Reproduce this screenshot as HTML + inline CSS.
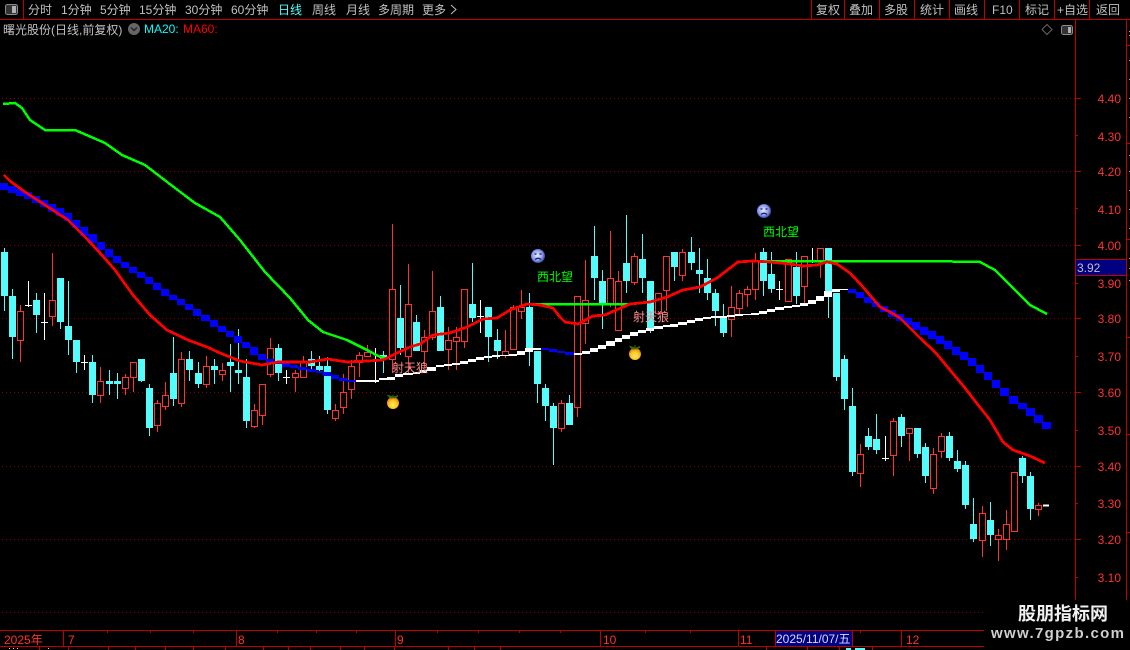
<!DOCTYPE html>
<html><head><meta charset="utf-8"><title>K线</title>
<style>
html,body{margin:0;padding:0;background:#000;width:1130px;height:650px;overflow:hidden}
svg{display:block}
text{font-family:"Liberation Sans","WenQuanYi Zen Hei","Noto Sans CJK SC",sans-serif;font-size:12px;fill:#c0c0c0}
.p{fill:#ff3232;text-anchor:end;font-size:12px}
.d{fill:#ff3232;font-size:12px}
</style></head><body>
<svg width="1130" height="650" viewBox="0 0 1130 650" xmlns="http://www.w3.org/2000/svg">
<defs>
<radialGradient id="f" cx=".45" cy=".45" r=".6"><stop offset="0" stop-color="#e8ecff"/><stop offset=".6" stop-color="#8c9cf0"/><stop offset="1" stop-color="#2a2f90"/></radialGradient>
<radialGradient id="o" cx=".5" cy=".65" r=".6"><stop offset="0" stop-color="#fff060"/><stop offset=".6" stop-color="#ffc020"/><stop offset="1" stop-color="#e08000"/></radialGradient>
</defs>
<rect width="1130" height="650" fill="#000"/>

<!-- grid -->
<g stroke="#8c0000" stroke-dasharray="1 3" shape-rendering="crispEdges">
<path d="M2 98.500H1075M2 171.500H1075M2 245.500H1075M2 318.500H1075M2 392.500H1075M2 466.500H1075M2 539.500H1075M2 612.500H984"/>
</g>

<g shape-rendering="crispEdges">
<!-- cyan wicks -->
<path fill="none" stroke="#54fcfc" d="M4.500 248V311M12.500 289V359M36.500 293V333M60.500 278V329M68.500 281V355M76.500 340V373M92.500 355V403M109.500 370V395M117.500 373V399M141.500 359V382M149.500 384V436M173.500 337V406M189.500 351V381M198.500 362V388M214.500 359V384M230.500 344V392M238.500 329V384M246.500 359V428M278.500 344V381M311.500 351V370M319.500 356V373M327.500 357V414M383.500 351V373M400.500 285V355M416.500 315V351M440.500 296V351M472.500 263V322M488.500 307V362M497.500 329V359M529.500 293V366M537.500 351V403M545.500 384V421M553.500 403V465M569.500 395V425M594.500 226V300M602.500 270V329M626.500 215V293M642.500 234V293M650.500 281V333M674.500 252V281M691.500 237V270M699.500 248V293M707.500 259V300M715.500 289V326M723.500 304V337M763.500 248V296M771.500 252V293M796.500 252V304M828.500 248V318M836.500 293V381M844.500 355V410M852.500 388V476M868.500 428V450M876.500 414V454M901.500 414V447M917.500 428V458M925.500 443V483M949.500 432V461M957.500 450V472M965.500 461V509M973.500 498V542M990.500 502V546M1022.500 456V483M1030.500 472V520"/>
<!-- cyan bodies -->
<path fill="none" stroke="#54fcfc" stroke-width="7" d="M4.500 252V296M12.500 296V337M36.500 300V315M60.500 278V322M68.500 326V340M76.500 340V362M92.500 362V395M109.500 381V384M117.500 381V384M141.500 359V381M149.500 388V428M173.500 373V399M189.500 359V370M198.500 373V384M214.500 366V370M230.500 362V366M238.500 370V373M246.500 377V421M278.500 348V373M311.500 359V366M319.500 366V370M327.500 366V410M383.500 355V359M400.500 318V348M416.500 322V351M440.500 307V351M472.500 304V318M488.500 307V337M497.500 340V351M529.500 307V351M537.500 351V384M545.500 388V406M553.500 406V428M569.500 403V425M594.500 256V278M602.500 281V303M626.500 263V281M642.500 259V278M650.500 281V328M674.500 252V267M691.500 252V263M699.500 270V274M707.500 278V293M715.500 293V311M723.500 318V333M763.500 252V281M771.500 274V289M796.500 267V296M828.500 248V297M836.500 293V377M844.500 359V399M852.500 406V472M868.500 436V447M876.500 439V450M901.500 417V436M917.500 428V454M925.500 447V476M949.500 436V458M957.500 461V469M965.500 465V505M973.500 524V539M990.500 520V535M1022.500 458V476M1030.500 476V509"/>
<!-- red wicks -->
<path fill="none" stroke="#ff3232" d="M20.500 305V362M52.500 253V326M100.500 367V403M125.500 374V395M133.500 362V392M157.500 400V432M165.500 382V410M181.500 352V407M206.500 356V388M222.500 363V381M254.500 404V428M262.500 384V425M270.500 338V377M295.500 370V392M303.500 356V377M335.500 404V421M343.500 374V414M351.500 360V399M359.500 352V377M367.500 345V356M392.500 224V373M408.500 264V373M424.500 330V368M432.500 271V340M448.500 327V370M456.500 327V370M464.500 289V348M505.500 330V358M513.500 305V349M521.500 290V319M561.500 400V432M577.500 296V417M585.500 260V344M610.500 231V307M618.500 271V330M634.500 253V285M658.500 293V313M666.500 256V311M682.500 249V281M731.500 286V337M739.500 290V315M747.500 286V307M755.500 253V300M788.500 259V301M804.500 256V303M820.500 248V278M860.500 444V487M893.500 418V476M909.500 428V461M933.500 448V494M941.500 433V458M982.500 506V557M998.500 529V561M1006.500 510V550M1014.500 472V531M1038.500 503V516"/>
<!-- red bodies -->
<path fill="#000" stroke="#ff3232" d="M17.500 311.500h6v29h-6zM49.500 300.500h6v16h-6zM97.500 381.500h6v14h-6zM122.500 377.500h6v11h-6zM130.500 362.500h6v15h-6zM154.500 403.500h6v22h-6zM162.500 395.500h6v11h-6zM178.500 359.500h6v44h-6zM203.500 366.500h6v18h-6zM219.500 370.500h6v4h-6zM251.500 410.500h6v16h-6zM259.500 384.500h6v31h-6zM267.500 348.500h6v26h-6zM292.500 373.500h6v4h-6zM300.500 362.500h6v15h-6zM332.500 410.500h6v8h-6zM340.500 392.500h6v15h-6zM348.500 366.500h6v23h-6zM356.500 355.500h6v7h-6zM364.500 352.500h6v4h-6zM389.500 289.500h6v70h-6zM405.500 304.500h6v52h-6zM421.500 337.500h6v14h-6zM429.500 311.500h6v26h-6zM445.500 340.500h6v9h-6zM453.500 337.500h6v4h-6zM461.500 289.500h6v52h-6zM502.500 351.500h6v4h-6zM510.500 307.500h6v42h-6zM518.500 307.500h6v4h-6zM558.500 403.500h6v25h-6zM574.500 296.500h6v111h-6zM582.500 300.500h6v23h-6zM607.500 278.500h6v25h-6zM615.500 281.500h6v49h-6zM631.500 256.500h6v26h-6zM655.500 293.500h6v20h-6zM663.500 256.500h6v34h-6zM679.500 252.500h6v23h-6zM728.500 307.500h6v12h-6zM736.500 293.500h6v15h-6zM744.500 289.500h6v5h-6zM752.500 260.500h6v29h-6zM785.500 259.500h6v42h-6zM801.500 256.500h6v30h-6zM817.500 248.500h6v12h-6zM857.500 454.500h6v19h-6zM890.500 421.500h6v34h-6zM906.500 428.500h6v5h-6zM930.500 454.500h6v34h-6zM938.500 436.500h6v15h-6zM979.500 513.500h6v27h-6zM995.500 535.500h6v4h-6zM1003.500 524.500h6v15h-6zM1011.500 472.500h6v59h-6zM1035.500 505.500h6v4h-6z"/>
<!-- white dojis -->
<path fill="none" stroke="#fff" d="M28.500 281V307M25 305.500H32M44.500 293V340M41 322.500H48M84.500 355V370M81 362.500H88M286.500 370V384M283 377.500H290M375.500 348V383M372 380.500H379M480.500 300V333M477 316.500H484M779.500 281V300M776 289.500H783M812.500 248V263M809 260.500H816M885.500 436V461M882 458.500H889"/>
<path fill="none" stroke="#fff" stroke-width="2" d="M1043 505.500H1049"/>

<!-- blue stepped -->
<path fill="#0000ff" d="M0 183h8v7h-8zM8 186h8v7h-8zM16 189h8v7h-8zM24 192h8v7h-8zM32 196h8v7h-8zM40 200h8v7h-8zM48 204h8v8h-8zM56 208h8v8h-8zM64 213h8v8h-8zM72 220h8v8h-8zM80 227h8v9h-8zM88 234h9v9h-9zM97 242h8v8h-8zM105 249h8v8h-8zM113 256h8v7h-8zM121 262h8v6h-8zM129 267h8v6h-8zM137 272h8v6h-8zM145 277h8v7h-8zM153 283h8v7h-8zM161 289h8v7h-8zM169 295h8v5h-8zM177 299h8v6h-8zM185 304h8v6h-8zM193 309h8v7h-8zM201 315h9v6h-9zM210 320h8v7h-8zM218 326h8v6h-8zM226 331h8v6h-8zM234 336h8v7h-8zM242 342h8v6h-8zM250 347h8v8h-8zM258 354h8v6h-8zM266 359h8v4h-8zM274 362h8v2h-8zM282 363h8v4h-8zM290 365h8v3h-8zM298 367h9v3h-9zM307 369h9v3h-9zM316 371h7v2h-7zM323 372h8v4h-8zM331 375h8v4h-8zM339 378h8v3h-8zM347 380h9v2h-9zM541 348h8v2h-8zM549 349h8v3h-8zM557 351h8v2h-8zM565 352h9v3h-9zM848 289h8v4h-8zM856 292h8v6h-8zM864 297h8v6h-8zM872 302h8v5h-8zM880 306h8v6h-8zM888 310h8v7h-8zM896 314h8v7h-8zM904 318h8v7h-8zM912 322h8v8h-8zM920 327h8v8h-8zM928 331h8v8h-8zM936 336h8v8h-8zM944 341h8v8h-8zM952 347h8v8h-8zM960 352h8v8h-8zM968 358h8v8h-8zM976 365h8v8h-8zM984 372h8v8h-8zM992 380h8v8h-8zM1000 388h9v8h-9zM1009 396h9v8h-9zM1018 403h9v6h-9zM1026 408h9v8h-9zM1034 415h9v8h-9zM1042 422h9v7h-9z"/>
<!-- white stepped -->
<path fill="#fff" d="M356 380h14v2h-14zM370 380h9v2h-9zM379 378h8v2h-8zM387 377h8v3h-8zM395 374h8v3h-8zM403 373h10v2h-10zM413 372h7v2h-7zM420 370h7v3h-7zM427 367h9v4h-9zM436 365h8v2h-8zM444 364h8v2h-8zM452 363h8v2h-8zM460 361h8v3h-8zM468 359h8v3h-8zM476 357h8v3h-8zM484 356h8v2h-8zM492 355h8v2h-8zM500 355h9v1h-9zM509 354h8v2h-8zM517 351h8v4h-8zM525 348h8v4h-8zM533 348h8v2h-8zM574 353h8v2h-8zM582 351h8v3h-8zM590 348h8v4h-8zM598 345h8v4h-8zM606 341h9v5h-9zM615 338h7v4h-7zM622 335h8v4h-8zM630 332h8v4h-8zM638 330h8v3h-8zM646 328h8v3h-8zM654 326h9v3h-9zM663 325h7v2h-7zM670 324h8v3h-8zM678 322h9v3h-9zM687 320h8v3h-8zM695 318h8v3h-8zM703 317h8v2h-8zM711 316h8v2h-8zM719 316h8v2h-8zM727 315h8v2h-8zM735 314h8v2h-8zM743 314h8v1h-8zM751 313h8v2h-8zM759 311h8v3h-8zM767 309h8v3h-8zM775 307h9v3h-9zM784 306h8v2h-8zM792 305h8v2h-8zM800 303h8v3h-8zM808 300h8v4h-8zM816 296h8v5h-8zM824 291h8v6h-8zM832 289h8v3h-8zM840 289h8v1h-8z"/>
<!-- green -->
<path fill="none" stroke="#00ff00" stroke-width="2.500" d="M3 104L15 103L22 108L30 120L45 130L75 130L105 143L122 155L145 165L175 188L195 203L220 217L240 240L265 272L290 298L308 320L323 332L347 340L367 350L380 357L385 358"/>
<path fill="none" stroke="#00ff00" stroke-width="2.500" d="M527 304H630M755 261H925L980 262L995 270L1010 285L1030 305L1047 314"/>
<!-- red MA -->
<path fill="none" stroke="#ff0000" stroke-width="2.800" d="M4 175L10 181L25 192L45 205L68 220L88 240L100 253L115 270L133 295L150 315L167 330L188 340L207 347L220 353L240 361L262 365L278 362L310 362L328 359L347 362L367 361L383 360L397 353L410 347L420 344L433 335L450 333L467 327L483 319L497 318L510 310L527 304L540 305L553 308L560 317L565 322L578 324L593 316L605 315L623 307L630 304L650 302L667 297L683 290L700 287L717 278L730 268L738 262L753 261L770 262L790 264L803 266L817 265L827 262L837 264L850 273L863 287L880 307L890 312L900 318L920 338L935 352L950 370L965 388L975 401L990 420L1003 442L1013 450L1030 456L1045 463"/>

<!-- axes and chrome -->
<g fill="none" stroke="#c00000">
<path d="M0 19.500H1130M23.500 0V19M811.500 0V19M844.500 0V19M879.500 0V19M914.500 0V19M949.500 0V19M984.500 0V19M1019.500 0V19M1054.500 0V19M1089.500 0V19M1075.500 19V602M1126.500 19V650"/>
<path d="M1075 98.500H1081M1075 135.500H1078M1075 171.500H1081M1075 208.500H1078M1075 245.500H1081M1075 283.500H1078M1075 318.500H1081M1075 356.500H1078M1075 392.500H1081M1075 430.500H1078M1075 466.500H1081M1075 503.500H1078M1075 539.500H1081M1075 577.500H1078"/>
<path d="M1126 45.500H1130M1126 143.500H1130M1126 239.500H1130M1126 337.500H1130M1126 434.500H1130M1126 532.500H1130"/>
<path d="M0 630.500H984M0 646.500H984M63.500 630V646M236.500 630V646M395.500 630V646M600.500 630V646M738.500 630V646M901.500 630V646"/>
<path d="M107.500 631V633M150.500 631V633M193.500 631V633M277.500 631V633M316.500 631V633M356.500 631V633M437.500 631V633M478.500 631V633M519.500 631V633M560.500 631V633M645.500 631V633M690.500 631V633M860.500 631V633"/>
<path d="M39.500 646V650M68.500 646V650M108.500 646V650M135.500 646V650M165.500 646V650M193.500 646V650M225.500 646V650M263.500 646V650M288.500 646V650M310.500 646V650M340.500 646V650M364.500 646V650M394.500 646V650M448.500 646V650M474.500 646V650M500.500 646V650M766.500 646V650M807.500 646V650M839.500 646V650M872.500 646V650"/>
</g>
<path stroke="#aaa" d="M1129 31.500h1M1129 35.500h1M1129 60.500h1M1129 79.500h1M1129 98.500h1M1129 117.500h1M1129 155.500h1M1129 171.500h1M1129 190.500h1M1129 209.500h1M1129 228.500h1M1129 258.500h1M1129 268.500h1M1129 280.500h1"/>
<path stroke="#ddd" d="M9 648.500h1M13 648.500h1M17 648.500h1M48 648.500h1"/>
<path fill="#54fcfc" d="M846 648h5v2h-5zM855 648h10v2h-10z"/>
<path fill="#000080" d="M775 631h78v15h-78z"/>
<path fill="none" stroke="#c00000" d="M775.500 631V646M852.500 631V646"/>
<path fill="#000080" stroke="#c00000" d="M1075.500 259.500h51v16h-51z"/>
</g>

<!-- icons chrome -->
<rect x="5.500" y="4.500" width="12" height="10" rx="2" fill="#333" stroke="#8a8a8a"/>
<rect x="12" y="6" width="4" height="7" fill="#b0b0b0"/>
<rect x="1061.500" y="25.500" width="11" height="9" rx="2" fill="#333" stroke="#8a8a8a"/>
<rect x="1068" y="27" width="3" height="6" fill="#b0b0b0"/>
<path d="M1047 24.500L1052 29.500L1047 34.500L1042 29.500Z" fill="none" stroke="#666"/>
<circle cx="134" cy="29" r="6" fill="#666"/>
<path d="M131 27.500L134 30.500L137 27.500" fill="none" stroke="#222" stroke-width="1.500"/>

<!-- top menu -->
<text x="28" y="14">分时</text>
<text x="61" y="14">1分钟</text>
<text x="100" y="14">5分钟</text>
<text x="139" y="14">15分钟</text>
<text x="185" y="14">30分钟</text>
<text x="231" y="14">60分钟</text>
<text x="278" y="14" style="fill:#54fcfc">日线</text>
<text x="312" y="14">周线</text>
<text x="346" y="14">月线</text>
<text x="378" y="14">多周期</text>
<text x="422" y="14">更多</text>
<path d="M451 5L456 9.500L451 14" fill="none" stroke="#c0c0c0"/>
<text x="816" y="14">复权</text>
<text x="849" y="14">叠加</text>
<text x="884" y="14">多股</text>
<text x="920" y="14">统计</text>
<text x="954" y="14">画线</text>
<text x="992" y="14">F10</text>
<text x="1025" y="14">标记</text>
<text x="1057" y="14">+自选</text>
<text x="1096" y="14">返回</text>

<!-- info row -->
<text x="3" y="34">曙光股份(日线,前复权)</text>
<text x="144" y="33" style="fill:#00ffff">MA20:</text>
<text x="183" y="33" style="fill:#ff0000">MA60:</text>

<!-- price labels -->
<text class="p" x="1121" y="103">4.40</text>
<text class="p" x="1121" y="141">4.30</text>
<text class="p" x="1121" y="176">4.20</text>
<text class="p" x="1121" y="214">4.10</text>
<text class="p" x="1121" y="250">4.00</text>
<text class="p" x="1121" y="288">3.90</text>
<text class="p" x="1121" y="323">3.80</text>
<text class="p" x="1121" y="361">3.70</text>
<text class="p" x="1121" y="397">3.60</text>
<text class="p" x="1121" y="435">3.50</text>
<text class="p" x="1121" y="471">3.40</text>
<text class="p" x="1121" y="508">3.30</text>
<text class="p" x="1121" y="544">3.20</text>
<text class="p" x="1121" y="582">3.10</text>
<text x="1077" y="272">3.92</text>

<!-- date axis -->
<text class="d" x="4" y="644">2025年</text>
<text class="d" x="68" y="644">7</text>
<text class="d" x="238" y="644">8</text>
<text class="d" x="397" y="644">9</text>
<text class="d" x="603" y="644">10</text>
<text class="d" x="740" y="644">11</text>
<text x="776" y="643" style="fill:#d8d8ff">2025/11/07/五</text>
<text class="d" x="906" y="644">12</text>

<!-- signals -->
<text x="537" y="281" style="fill:#00ff00">西北望</text>
<text x="763" y="236" style="fill:#00ff00">西北望</text>
<text x="392" y="372" style="fill:#ff8c8c">射天狼</text>
<text x="633" y="321" style="fill:#ff8c8c">射天狼</text>

<g id="faces">
<circle cx="538" cy="256" r="7" fill="url(#f)"/>
<path d="M534.500 254h2M539.500 254h2M535 259.500q3-2.500 6 0" fill="none" stroke="#1a1a50" stroke-width="1.200"/>
<circle cx="764" cy="211" r="7" fill="url(#f)"/>
<path d="M760.500 209h2M765.500 209h2M761 214.500q3-2.500 6 0" fill="none" stroke="#1a1a50" stroke-width="1.200"/>
</g>
<g>
<circle cx="393" cy="403" r="6" fill="url(#o)"/>
<path d="M393 397L388 395.500Q390 399 393 397.500L398 395.500Q395.500 398.500 393 397.500V395" fill="#3a6a10" stroke="#3a6a10"/>
<circle cx="635" cy="354" r="6" fill="url(#o)"/>
<path d="M635 348L630 346.500Q632 350 635 348.500L640 346.500Q637.500 349.500 635 348.500V345" fill="#3a6a10" stroke="#3a6a10"/>
</g>

<!-- watermark -->
<rect x="984" y="600" width="146" height="50" fill="#000"/>
<text x="1063" y="620" text-anchor="middle" style="font-family:'Liberation Sans','Noto Sans CJK SC',sans-serif;font-size:18px;font-weight:700;fill:#f0f0f0">股朋指标网</text>
<text x="991" y="638" textLength="133" style="font-family:'Liberation Sans',sans-serif;font-size:15px;font-weight:700;fill:#cfcfcf">www.7gpzb.com</text>
</svg>
</body></html>
